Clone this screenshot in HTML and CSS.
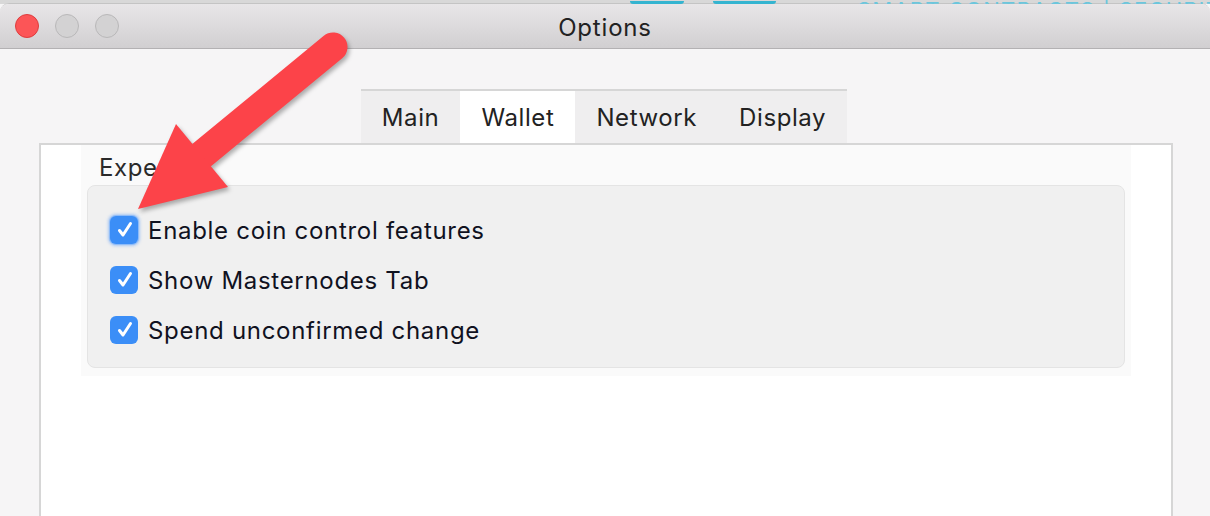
FILE: index.html
```html
<!DOCTYPE html>
<html>
<head>
<meta charset="utf-8">
<link rel="stylesheet" href="styles.css">
</head>
<body>
<div class="desk">
  <span class="blob b1"></span>
  <span class="blob b2"></span>
  <span class="desk-text">SMART CONTRACTS | SECURITY | E</span>
</div>
<div class="window">
  <div class="titlebar">
    <div class="lights">
      <span class="light close"></span>
      <span class="light"></span>
      <span class="light"></span>
    </div>
    <div class="title">Options</div>
    <div></div>
  </div>
  <div class="content">
    <div class="tabs">
      <div class="tab">Main</div>
      <div class="tab active">Wallet</div>
      <div class="tab">Network</div>
      <div class="tab">Display</div>
    </div>
    <div class="pane">
      <div class="group">
        <div class="group-title">Expert</div>
        <div class="group-box">
          <div class="check">
            <span class="box focus"><svg viewBox="0 0 28 28"><path d="M9.5 14.5 L13 19 L20.5 7.5"/></svg></span>
            <span class="label">Enable coin control features</span>
          </div>
          <div class="check">
            <span class="box"><svg viewBox="0 0 28 28"><path d="M9.5 14.5 L13 19 L20.5 7.5"/></svg></span>
            <span class="label">Show Masternodes Tab</span>
          </div>
          <div class="check">
            <span class="box"><svg viewBox="0 0 28 28"><path d="M9.5 14.5 L13 19 L20.5 7.5"/></svg></span>
            <span class="label">Spend unconfirmed change</span>
          </div>
        </div>
      </div>
    </div>
  </div>
</div>
<svg class="arrow" width="1210" height="516" viewBox="0 0 1210 516">
  <g class="arrow-shape">
    <line x1="333" y1="47" x2="203" y2="154" stroke="#fc4349" stroke-width="29" stroke-linecap="round"/>
    <polygon points="138,209 176,124 228,187" fill="#fc4349"/>
  </g>
</svg>
</body>
</html>
```

FILE: styles.css
```css
html, body {
  margin: 0;
  padding: 0;
}
body {
  width: 1210px;
  height: 516px;
  overflow: hidden;
  background: #f6f5f6;
  font-family: Inter, "Noto Sans", "Liberation Sans", sans-serif;
  position: relative;
}
.desk {
  height: 4px;
  background: #d8d8d8;
  display: flex;
  align-items: flex-end;
  overflow: hidden;
  padding-left: 630px;
}
.blob {
  display: block;
  flex-shrink: 0;
  height: 3px;
  background: #34b4d0;
  border-radius: 0 0 6px 6px;
}
.b1 { width: 54px; margin-right: 29px; }
.b2 { width: 63px; margin-right: 81px; }
.desk-text {
  flex-shrink: 0;
  font-size: 22px;
  line-height: 22px;
  color: #6cc6dc;
  letter-spacing: 1.2px;
  white-space: nowrap;
  margin-bottom: -17px;
}
.window {
  border-radius: 9px 9px 0 0;
  overflow: hidden;
  border-top: 1px solid #c4c4c4;
  margin-top: -1px;
  background: #f6f5f6;
}
.titlebar {
  height: 44px;
  background: linear-gradient(#e8e6e8, #d1cfd1);
  border-bottom: 1px solid #b3b1b3;
  display: grid;
  grid-template-columns: 1fr auto 1fr;
  align-items: center;
}
.lights {
  display: flex;
  gap: 16px;
  padding-left: 15px;
}
.light {
  width: 22px;
  height: 22px;
  border-radius: 50%;
  background: #d3d2d3;
  border: 1px solid #b9b8b9;
}
.light.close {
  background: #fc5557;
  border-color: #de3d3e;
}
.title {
  font-size: 24px;
  letter-spacing: 0.8px;
  color: #222222;
  padding-top: 2px;
}
.content {
  padding: 40px 37px 0 39px;
  height: 467px;
  box-sizing: border-box;
  display: flex;
  flex-direction: column;
}
.tabs {
  align-self: center;
  display: flex;
  background: #efeeef;
  border-top: 2px solid #d6d6d6;
  height: 52px;
  margin-right: 4px;
}
.tab {
  padding: 2px 21px 0 21px;
  font-size: 24px;
  letter-spacing: 0.6px;
  line-height: 50px;
  color: #222222;
}
.tab.active {
  background: #ffffff;
}
.pane {
  flex: 1;
  background: #ffffff;
  border: 2px solid #d6d6d6;
  border-bottom: none;
  padding: 0 40px;
}
.group {
  background: #fafafa;
  padding: 0 6px 8px 6px;
}
.group-title {
  font-size: 24px;
  letter-spacing: 0.6px;
  line-height: 34px;
  padding-top: 6px;
  padding-left: 12px;
  color: #2a2a2a;
}
.group-box {
  background: #f0f0f0;
  border: 1px solid #e4e4e4;
  border-radius: 8px;
  padding: 19px 22px 12px 22px;
}
.check {
  display: flex;
  align-items: center;
  gap: 10px;
  height: 50px;
}
.box {
  width: 28px;
  height: 28px;
  border-radius: 6px;
  background: #3b8ef7;
  display: flex;
}
.box.focus {
  box-shadow: 0 0 0 1px #8fbcf8, 0 0 3px 2px rgba(110, 165, 245, 0.55);
}
.box svg {
  width: 28px;
  height: 28px;
}
.box path {
  fill: none;
  stroke: #ffffff;
  stroke-width: 3;
  stroke-linecap: round;
  stroke-linejoin: round;
}
.label {
  font-size: 24px;
  letter-spacing: 0.7px;
  line-height: 50px;
  padding-top: 1px;
  color: #10121f;
}
.arrow {
  position: absolute;
  left: 0;
  top: 0;
  pointer-events: none;
}
.arrow-shape {
  filter: drop-shadow(2px 3px 2px rgba(0, 0, 0, 0.3));
}
```
